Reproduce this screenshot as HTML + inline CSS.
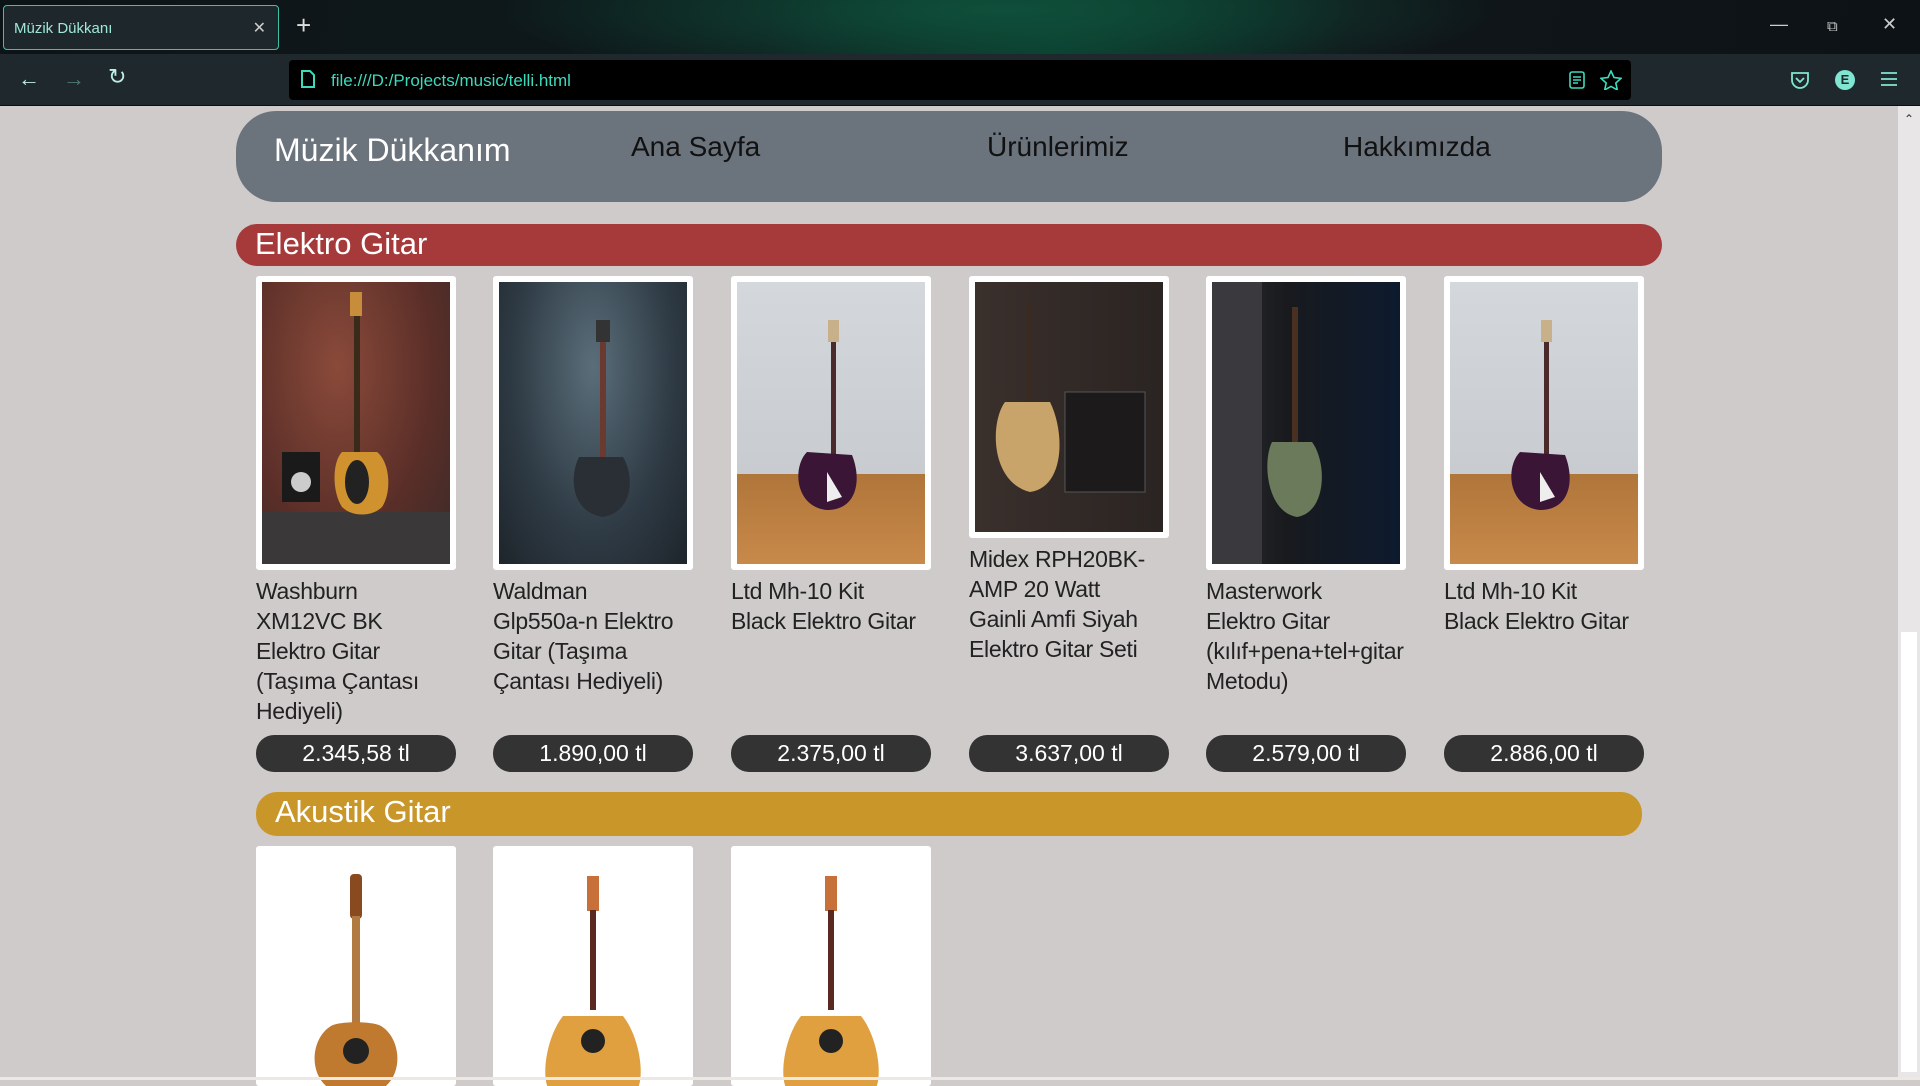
<!DOCTYPE html>
<html><head><meta charset="utf-8"><style>
*{margin:0;padding:0;box-sizing:border-box}
body{width:1920px;height:1080px;overflow:hidden;background:#cfcbcb;font-family:"Liberation Sans",sans-serif;position:relative}
.top{position:absolute;left:0;top:0;width:1920px;height:54px;background:radial-gradient(ellipse 500px 80px at 1000px 10px,#0f4f3a,transparent),linear-gradient(100deg,#0d1418 0%,#0f1a1c 40%,#0a3a2c 55%,#10161a 70%,#0c1216 100%)}
.tab{position:absolute;left:3px;top:5px;width:276px;height:45px;border:1px solid #3fc1a8;border-radius:4px;background:#1e272c;color:#9fe8d8;font-size:15px;padding:14px 10px}
.tab .x{position:absolute;right:12px;top:12px;color:#ccc;font-size:16px}
.plus{position:absolute;left:296px;top:10px;color:#ddd;font-size:26px}
.wc{position:absolute;top:14px;color:#ccc;font-size:18px}
.bar{position:absolute;left:0;top:54px;width:1920px;height:52px;background:#1e282d;border-bottom:1px solid #0b0f11}
.url{position:absolute;left:289px;top:60px;width:1342px;height:40px;background:#000;border-radius:4px;color:#3ddbbc;font-size:17px;padding:11px 42px}
.ic{position:absolute;color:#80e6d2}
.sb{position:absolute;right:0;top:106px;width:22px;height:974px;background:#e8e6e6}
.sb .th{position:absolute;left:3px;top:526px;width:16px;height:440px;background:#fff}
.nav{position:absolute;left:236px;top:111px;width:1426px;height:91px;background:#6b737c;border-radius:40px}
.nav span{position:absolute;color:#111;font-size:28px;top:20px}
.nav .brand{color:#fff;font-size:32px;left:38px;top:21px}
.sec{position:absolute;height:42px;border-radius:21px;color:#fff;font-size:31px;padding:2px 19px}
.card{position:absolute;top:276px;width:200px}
.fr{background:#fff;padding:6px;border-radius:3px;height:294px}
.img{width:100%;height:100%;overflow:hidden}
.t{margin-top:6px;font-size:23px;line-height:30px;color:#222;height:156px;letter-spacing:-0.3px;white-space:nowrap}
.p{position:absolute;top:459px;left:0;width:200px;height:37px;border-radius:18px;background:#333;color:#fff;font-size:23px;text-align:center;line-height:37px}
.ac{position:absolute;top:846px;width:200px;height:240px;background:#fff;border-radius:3px;overflow:hidden}
</style></head><body>
<div class="top"></div>
<div class="tab">Müzik Dükkanı<span class="x">✕</span></div>
<div class="plus">+</div>
<div class="wc" style="left:1770px">—</div><div class="wc" style="left:1827px;font-size:15px;top:18px">⧉</div><div class="wc" style="left:1882px">✕</div>
<div class="bar"></div>
<div class="ic" style="left:18px;top:66px;font-size:22px;color:#bfeee4">←</div>
<div class="ic" style="left:63px;top:66px;font-size:22px;color:#4d7a72">→</div>
<div class="ic" style="left:108px;top:64px;font-size:22px;color:#bfeee4">↻</div>
<div class="url"><svg style="position:absolute;left:12px;top:10px" width="14" height="18"><path d="M1 1h8l4 4v12H1z" fill="none" stroke="#3ddbbc" stroke-width="2"/></svg>file:///D:/Projects/music/telli.html</div>
<svg style="position:absolute;left:1569px;top:71px" width="16" height="18"><rect x="1" y="1" width="14" height="16" rx="2" fill="none" stroke="#3ddbbc" stroke-width="1.6"/><path d="M4 6h8M4 9h8M4 12h5" stroke="#3ddbbc" stroke-width="1.5"/></svg>
<svg style="position:absolute;left:1600px;top:70px" width="22" height="20"><path d="M11 1l3 6.5 7 .8-5.2 4.7 1.5 6.9L11 16.4 4.7 19.9l1.5-6.9L1 8.3l7-.8z" fill="none" stroke="#3ddbbc" stroke-width="1.6"/></svg>
<svg style="position:absolute;left:1790px;top:71px" width="20" height="18"><path d="M2 2h16v7a8 8 0 0 1-16 0z" fill="none" stroke="#80e6d2" stroke-width="1.8"/><path d="M6 7l4 4 4-4" fill="none" stroke="#80e6d2" stroke-width="1.8"/></svg>
<div style="position:absolute;left:1835px;top:70px;width:20px;height:20px;border-radius:50%;background:#80e6d2;color:#1e282d;font-size:13px;font-weight:bold;text-align:center;line-height:20px">E</div>
<svg style="position:absolute;left:1881px;top:72px" width="16" height="14"><path d="M0 1h16M0 7h16M0 13h16" stroke="#80e6d2" stroke-width="1.8"/></svg>

<div class="sb"><div style="position:absolute;left:6px;top:6px;color:#333;font-size:12px">⌃</div><div class="th"></div></div>

<div class="nav"><span class="brand">Müzik Dükkanım</span><span style="left:395px">Ana Sayfa</span><span style="left:751px">Ürünlerimiz</span><span style="left:1107px">Hakkımızda</span></div>

<div class="sec" style="left:236px;top:224px;width:1426px;background:#a63a3a">Elektro Gitar</div>

<div class="card" style="left:256px"><div class="fr"><div class="img" style="background:radial-gradient(ellipse at 40% 30%,#8a4a3a,#5a2e28 60%,#3a2a28)"><svg width="188" height="282"><rect x="20" y="170" width="38" height="50" fill="#1a1a1a"/><circle cx="39" cy="200" r="10" fill="#ccc"/><rect x="0" y="230" width="188" height="52" fill="#3a3838"/><rect x="92" y="20" width="6" height="150" fill="#3a2a1a"/><rect x="88" y="10" width="12" height="24" fill="#c88d3a"/><path d="M80 170c-10 10-10 40 0 55 10 10 30 10 40 0 10-15 8-45-5-55z" fill="#d0922e"/><ellipse cx="95" cy="200" rx="12" ry="22" fill="#222"/></svg></div></div><div class="t">Washburn<br>XM12VC BK<br>Elektro Gitar<br>(Taşıma Çantası<br>Hediyeli)</div><div class="p">2.345,58 tl</div></div>

<div class="card" style="left:493px"><div class="fr"><div class="img" style="background:radial-gradient(ellipse at 50% 30%,#5a6e7a,#2e3a44 60%,#1e252b)"><svg width="188" height="282"><rect x="101" y="50" width="6" height="130" fill="#6a3a30"/><rect x="97" y="38" width="14" height="22" fill="#333"/><path d="M80 175c-10 20-8 55 24 60 30-5 32-40 20-60z" fill="#2a2f35"/></svg></div></div><div class="t">Waldman<br>Glp550a-n Elektro<br>Gitar (Taşıma<br>Çantası Hediyeli)</div><div class="p">1.890,00 tl</div></div>

<div class="card" style="left:731px"><div class="fr"><div class="img" style="background:linear-gradient(#d4d8dc,#c8ccd0 68%,#b0753a 68%,#c88a4a)"><svg width="188" height="282"><rect x="94" y="50" width="5" height="140" fill="#4a2a2a"/><rect x="91" y="38" width="11" height="22" fill="#c8b08a"/><path d="M70 170c-15 15-12 55 20 58 30 0 35-30 25-55z" fill="#3a1535"/><path d="M90 190l15 25-15 5z" fill="#eee"/></svg></div></div><div class="t">Ltd Mh-10 Kit<br>Black Elektro Gitar</div><div class="p">2.375,00 tl</div></div>

<div class="card" style="left:969px"><div class="fr" style="height:262px"><div class="img" style="background:linear-gradient(90deg,#3a302c,#2a2422)"><svg width="188" height="250"><rect x="90" y="110" width="80" height="100" fill="#1c1a1a" stroke="#555"/><rect x="52" y="20" width="5" height="110" fill="#3a2a20"/><path d="M30 120c-15 20-15 80 25 90 35-5 35-60 20-90z" fill="#c8a46a"/></svg></div></div><div class="t" style="margin-top:6px">Midex RPH20BK-<br>AMP 20 Watt<br>Gainli Amfi Siyah<br>Elektro Gitar Seti</div><div class="p">3.637,00 tl</div></div>

<div class="card" style="left:1206px"><div class="fr"><div class="img" style="background:linear-gradient(90deg,#2a2c30,#181a1e 40%,#0d1a2e)"><svg width="188" height="282"><rect x="0" y="0" width="50" height="282" fill="#3a3a3e"/><rect x="80" y="25" width="6" height="140" fill="#4a3020"/><path d="M60 160c-10 20-5 70 25 75 30-5 30-55 15-75z" fill="#6a7a5a"/></svg></div></div><div class="t">Masterwork<br>Elektro Gitar<br>(kılıf+pena+tel+gitar<br>Metodu)</div><div class="p">2.579,00 tl</div></div>

<div class="card" style="left:1444px"><div class="fr"><div class="img" style="background:linear-gradient(#d4d8dc,#c8ccd0 68%,#b0753a 68%,#c88a4a)"><svg width="188" height="282"><rect x="94" y="50" width="5" height="140" fill="#4a2a2a"/><rect x="91" y="38" width="11" height="22" fill="#c8b08a"/><path d="M70 170c-15 15-12 55 20 58 30 0 35-30 25-55z" fill="#3a1535"/><path d="M90 190l15 25-15 5z" fill="#eee"/></svg></div></div><div class="t">Ltd Mh-10 Kit<br>Black Elektro Gitar</div><div class="p">2.886,00 tl</div></div>

<div class="sec" style="left:256px;top:792px;width:1386px;height:44px;background:#c9962a">Akustik Gitar</div>

<div class="ac" style="left:256px"><svg width="200" height="240"><rect x="94" y="28" width="12" height="45" rx="4" fill="#8a4a20"/><rect x="96" y="70" width="8" height="120" fill="#b07a40"/><path d="M75 180c-25 15-25 70 25 70s50-55 25-70c-8-5-42-5-50 0z" fill="#c07a30"/><circle cx="100" cy="205" r="13" fill="#222"/></svg></div>
<div class="ac" style="left:493px"><svg width="200" height="240"><rect x="94" y="30" width="12" height="35" fill="#c8703a"/><rect x="97" y="64" width="6" height="100" fill="#5a2a20"/><path d="M70 170c-20 25-25 80-5 80h70c20 0 15-55-5-80z" fill="#e0a040"/><circle cx="100" cy="195" r="12" fill="#222"/></svg></div>
<div class="ac" style="left:731px"><svg width="200" height="240"><rect x="94" y="30" width="12" height="35" fill="#c8703a"/><rect x="97" y="64" width="6" height="100" fill="#5a2a20"/><path d="M70 170c-20 25-25 80-5 80h70c20 0 15-55-5-80z" fill="#e0a040"/><circle cx="100" cy="195" r="12" fill="#222"/></svg></div>
<div style="position:absolute;left:0;top:1077px;width:1920px;height:3px;background:#eee8e4"></div>
</body></html>
